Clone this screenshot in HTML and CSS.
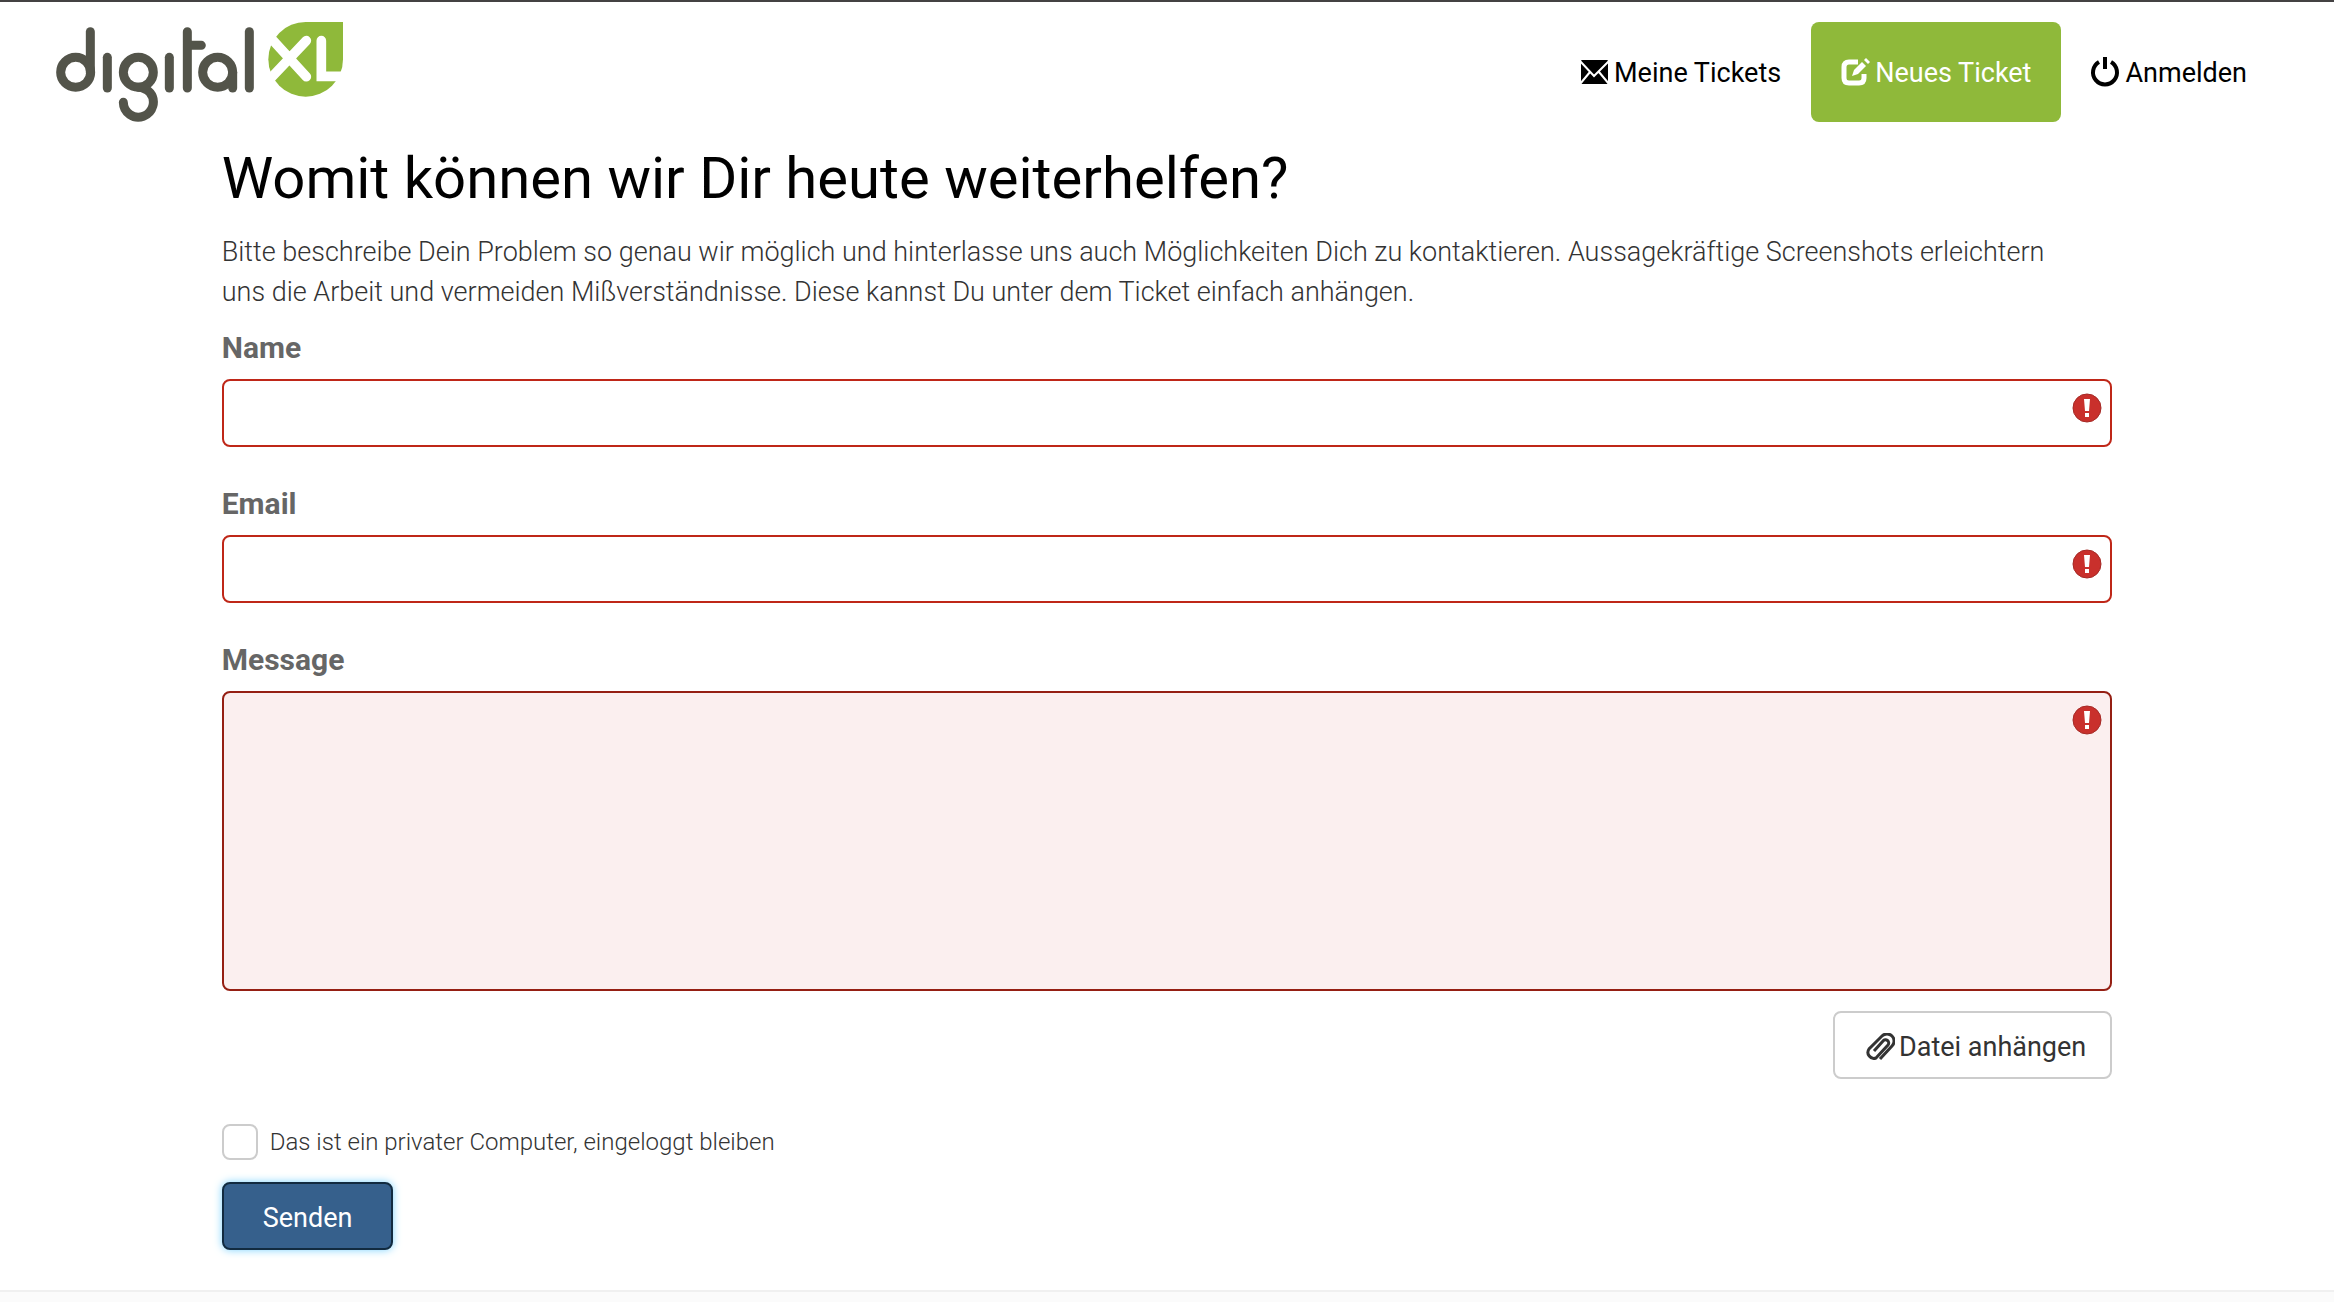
FILE: index.html
```
<!DOCTYPE html>
<html lang="de">
<head>
    <meta charset="utf-8">
    <title>digitalXL Support</title>
    <link rel="stylesheet" href="styles.css">
</head>
<body>
    <header class="navbar">
        <a class="logo" href="#" aria-label="digitalXL">
            <svg viewBox="78 66 861 300" width="287" height="100">
                <g fill="none" stroke="#53544a" stroke-width="27" stroke-linecap="round">
                    <circle cx="137" cy="217" r="45"/>
                    <path d="M181 95V217"/>
                    <path d="M232 172V264"/>
                    <circle cx="325" cy="217" r="45"/>
                    <path d="M280 307A45 45 0 1 0 360 278Q345 263 325 262"/>
                    <path d="M418 172V264"/>
                    <path d="M472 95V264M472 136H514"/>
                    <circle cx="563" cy="217" r="45"/>
                    <path d="M608 217V264"/>
                    <path d="M658 95V264"/>
                </g>
                <path fill="#8fb93a" d="M827 66H939V178A112 112 0 1 1 827 66Z"/>
                <g fill="none" stroke="#fff" stroke-width="29" stroke-linecap="round">
                    <path d="M829 122L700 258M829 230L708 98"/>
                    <path d="M874 122V229H950"/>
                </g>
            </svg>
        </a>
        <nav class="nav">
            <a class="nav-link" href="#">
                <svg class="icon" viewBox="0 0 28 28"><rect x="1" y="1" width="27" height="24" rx="1"/><path fill="none" stroke="#fff" stroke-width="2" d="M0 2L14 17L29 2M0 25L10 13M29 25L19 13"/></svg>
                Meine Tickets
            </a>
            <a class="nav-link nav-link-active" href="#">
                <svg class="icon" viewBox="0 0 28 28"><path fill="none" stroke="currentColor" stroke-width="5" d="M17 3H8Q3 3 3 8V19Q3 24 8 24H18Q23 24 23 19V15"/><path d="M11 17L13 11L21 3L25 7L17 15ZM23 1L25 -1L29 3L27 5Z"/></svg>
                Neues Ticket
            </a>
            <a class="nav-link" href="#">
                <svg class="icon" viewBox="0 0 28 28"><path fill="none" stroke="currentColor" stroke-width="4" d="M8 3A12 12 0 1 0 20 3"/><path d="M12 -2H16V10H12Z"/></svg>
                Anmelden
            </a>
        </nav>
    </header>

    <main class="container">
        <h1>Womit können wir Dir heute weiterhelfen?</h1>
        <p>Bitte beschreibe Dein Problem so genau wir möglich und hinterlasse uns auch Möglichkeiten Dich zu kontaktieren. Aussagekräftige Screenshots erleichtern uns die Arbeit und vermeiden Mißverständnisse. Diese kannst Du unter dem Ticket einfach anhängen.</p>
        <form>
            <div class="form-group">
                <label for="name">Name</label>
                <div class="field">
                    <input type="text" id="name" class="form-control">
                    <svg class="error" viewBox="0 0 30 30"><circle cx="15" cy="15" r="14"/><path d="M12 6H18L17 18H13ZM13 20H17V24H13Z"/></svg>
                </div>
            </div>
            <div class="form-group">
                <label for="email">Email</label>
                <div class="field">
                    <input type="email" id="email" class="form-control">
                    <svg class="error" viewBox="0 0 30 30"><circle cx="15" cy="15" r="14"/><path d="M12 6H18L17 18H13ZM13 20H17V24H13Z"/></svg>
                </div>
            </div>
            <div class="form-group">
                <label for="message">Message</label>
                <div class="field">
                    <textarea id="message" class="form-control"></textarea>
                    <svg class="error" viewBox="0 0 30 30"><circle cx="15" cy="15" r="14"/><path d="M12 6H18L17 18H13ZM13 20H17V24H13Z"/></svg>
                </div>
            </div>
            <div class="attach">
                <button type="button" class="btn btn-default">
                    <svg class="clip" viewBox="0 0 30 28"><path d="M15 26L27 13A7 7 0 0 0 17 3L4 16A6 6 0 0 0 11 25L23 12A3 3 0 0 0 18 8L9 18"/></svg>
                    Datei anhängen
                </button>
            </div>
            <div class="remember">
                <input type="checkbox" id="remember">
                <label for="remember">Das ist ein privater Computer, eingeloggt bleiben</label>
            </div>
            <button type="submit" class="btn btn-primary">Senden</button>
        </form>
    </main>

    <footer></footer>
</body>
</html>
```
FILE: styles.css
```
* {
    box-sizing: border-box;
}

body {
    margin: 0;
    min-height: 100vh;
    display: flex;
    flex-direction: column;
    border-top: 2px solid #444243;
    background-color: #fff;
    color: #333;
    font-family: Roboto, "Open Sans", sans-serif;
    font-size: 27px;
    line-height: 40px;
}

.navbar {
    display: flex;
    justify-content: space-between;
    padding: 20px 57px 0 56px;
}

.logo svg {
    display: block;
}

.nav {
    display: flex;
}

.nav-link {
    display: flex;
    align-items: center;
    gap: 6px;
    height: 100px;
    padding: 2px 30px 0;
    border-radius: 8px;
    color: #000;
    text-decoration: none;
}

.nav-link-active {
    background-color: #8fb93a;
    color: #fff;
}

.icon {
    width: 28px;
    height: 28px;
    fill: currentColor;
    overflow: visible;
}

.container {
    width: 81%;
    margin: 0 auto;
}

h1 {
    margin: 20px 0 18px;
    color: #000;
    font-size: 58px;
    font-weight: 400;
    line-height: 72px;
}

p {
    margin: 0 0 11px;
    padding-right: 30px;
    font-weight: 300;
}

.form-group {
    margin-bottom: 32px;
}

.form-group label {
    display: block;
    padding: 10px 0 16px;
    color: #666;
    font-size: 30px;
    font-weight: 700;
    line-height: 30px;
}

.field {
    position: relative;
}

.form-control {
    display: block;
    width: 100%;
    height: 68px;
    padding: 12px 48px 12px 24px;
    border: 2px solid #bf2718;
    border-radius: 8px;
    font: inherit;
}

textarea.form-control {
    height: 300px;
    border-color: #951f13;
    background-color: #fbefef;
    resize: none;
}

.error {
    position: absolute;
    top: 14px;
    right: 10px;
    width: 30px;
    height: 30px;
}

.error circle {
    fill: #c9302c;
    stroke: #a52a26;
    stroke-width: 1;
}

.error path {
    fill: #fff;
}

.attach {
    display: flex;
    justify-content: flex-end;
    margin-top: -12px;
}

.btn {
    display: flex;
    align-items: center;
    height: 68px;
    border: 2px solid #ccc;
    border-radius: 8px;
    background-color: #fff;
    color: #333;
    font: inherit;
}

.btn-default {
    gap: 4px;
    padding: 4px 24px 0 30px;
}

.clip {
    width: 30px;
    height: 28px;
    fill: none;
    stroke: #333;
    stroke-width: 3;
}

.btn-primary {
    padding: 4px 39px 0;
    border-color: #122b40;
    background-color: #36608c;
    color: #fff;
    box-shadow: 0 0 8px #7cd3ff;
}

.remember {
    display: flex;
    align-items: center;
    gap: 12px;
    margin: 45px 0 22px;
    font-size: 24px;
    font-weight: 300;
    line-height: 36px;
}

.remember input {
    appearance: none;
    width: 36px;
    height: 36px;
    margin: 0;
    border: 2px solid #ccc;
    border-radius: 8px;
}

footer {
    flex: 1;
    margin-top: 40px;
    border-top: 2px solid #f0f0f0;
    background-color: #fbfbfb;
}
```
